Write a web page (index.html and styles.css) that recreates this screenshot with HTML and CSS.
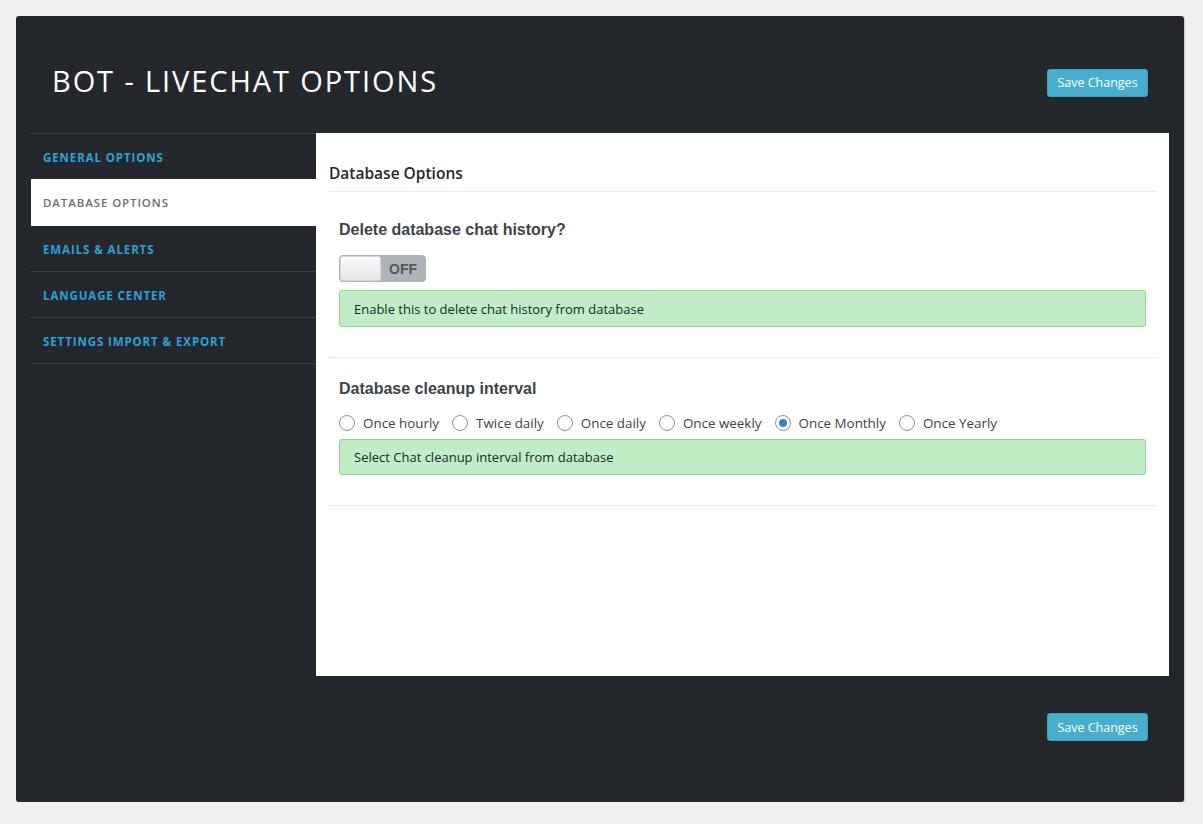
FILE: index.html
```html
<!DOCTYPE html>
<html lang="en">
<head>
<meta charset="utf-8">
<title>BOT - LIVECHAT OPTIONS</title>
<link rel="stylesheet" href="styles.css">
</head>
<body>
<div class="wrap">
  <header class="head">
    <h1 class="title">BOT - LIVECHAT OPTIONS</h1>
    <button class="btn">Save Changes</button>
  </header>
  <div class="main">
    <nav class="side">
      <a class="side-item">General Options</a>
      <a class="side-item active">Database Options</a>
      <a class="side-item">Emails &amp; Alerts</a>
      <a class="side-item">Language Center</a>
      <a class="side-item">Settings Import &amp; Export</a>
    </nav>
    <section class="panel">
      <h2 class="panel-title">Database Options</h2>
      <div class="group">
        <h3 class="group-title">Delete database chat history?</h3>
        <div class="toggle">
          <span class="knob"></span>
          <span class="toggle-label">OFF</span>
        </div>
        <div class="notice">Enable this to delete chat history from database</div>
      </div>
      <div class="group">
        <h3 class="group-title">Database cleanup interval</h3>
        <div class="radios">
          <label class="radio"><input type="radio" name="iv"><span>Once hourly</span></label>
          <label class="radio"><input type="radio" name="iv"><span>Twice daily</span></label>
          <label class="radio"><input type="radio" name="iv"><span>Once daily</span></label>
          <label class="radio"><input type="radio" name="iv"><span>Once weekly</span></label>
          <label class="radio"><input type="radio" name="iv" checked><span>Once Monthly</span></label>
          <label class="radio"><input type="radio" name="iv"><span>Once Yearly</span></label>
        </div>
        <div class="notice notice-2">Select Chat cleanup interval from database</div>
      </div>
    </section>
  </div>
  <footer class="foot">
    <button class="btn">Save Changes</button>
  </footer>
</div>
</body>
</html>
```

FILE: styles.css
```css
* { box-sizing: border-box; }
html, body { margin: 0; padding: 0; }
body {
  background: #f0f0f0;
  font-family: "Open Sans", "Noto Sans", sans-serif;
  color: #23282d;
}
.wrap {
  margin: 16px 0 0 16px;
  width: 1168px;
  height: 786px;
  background: #24282d;
  border-radius: 3px;
  box-shadow: 1px 1px 1px #c8c8c8;
  padding: 0 15px;
  display: flex;
  flex-direction: column;
}
.head {
  height: 117px;
  display: flex;
  align-items: center;
  justify-content: space-between;
  padding: 14px 21px 0 21px;
}
.title {
  margin: 0;
  margin-top: -3px;
  font-size: 29px;
  font-weight: 400;
  color: #fff;
  letter-spacing: 1.9px;
}
.btn {
  width: 101px;
  height: 28px;
  background: #47afcd;
  border: 1px solid #3d9fbc;
  border-radius: 3px;
  color: #fff;
  font-family: "Open Sans", "Noto Sans", sans-serif;
  font-size: 12.5px;
  padding: 0;
  cursor: pointer;
}
.head .btn { margin-top: 2px; }
.main {
  display: flex;
  height: 543px;
}
.side {
  width: 285px;
  display: flex;
  flex-direction: column;
  border-top: 1px solid #3d4247;
}
.side-item {
  height: 46px;
  display: flex;
  align-items: center;
  padding-left: 12px;
  padding-top: 1px;
  border-bottom: 1px solid #3d4247;
  color: #2ea0d6;
  font-size: 11.5px;
  font-weight: 700;
  text-transform: uppercase;
  letter-spacing: 0.9px;
}
.side-item.active {
  background: #fff;
  color: #6c6c6c;
  font-weight: 600;
  border-bottom-color: #fff;
  margin-top: -1px;
  height: 47px;
}
.panel {
  flex: 1;
  background: #fff;
  padding: 0 13px;
}
.panel-title {
  margin: 0;
  padding-top: 29px;
  height: 59px;
  font-size: 15.5px;
  font-weight: 600;
  color: #23282d;
  border-bottom: 1px solid #eaeaea;
  line-height: 22px;
}
.group {
  padding: 20px 10px 30px;
  border-bottom: 1px solid #eaeaea;
}
.group:first-of-type { padding-top: 27px; }
.group-title {
  margin: 0;
  font-family: "Liberation Sans", Arial, sans-serif;
  font-size: 16px;
  font-weight: 700;
  color: #3c434a;
  line-height: 22px;
}
.toggle {
  margin-top: 14px;
  width: 87px;
  height: 27px;
  border: 1px solid #aeb3b8;
  border-radius: 4px;
  background: #afb4b9;
  display: flex;
  align-items: center;
  position: relative;
}
.knob {
  width: 41px;
  height: 25px;
  border-radius: 3px;
  background: linear-gradient(#fafafa, #e6e6e6);
  border: 1px solid #d5d5d5;
}
.toggle-label {
  margin-left: 8px;
  font-family: "Liberation Sans", Arial, sans-serif;
  font-weight: 700;
  font-size: 14px;
  color: #55595d;
}
.notice {
  margin-top: 8px;
  height: 37px;
  display: flex;
  align-items: center;
  padding-left: 14px;
  background: #c1edc5;
  border: 1px solid #8ed793;
  border-radius: 3px;
  font-size: 13px;
  color: #23282d;
}
.notice-2 { height: 36px; margin-top: 6px; }
.radios {
  margin-top: 13px;
  display: flex;
  align-items: center;
  height: 20px;
}
.radio {
  display: flex;
  align-items: center;
  margin-right: 13px;
  font-size: 13.4px;
  color: #3c434a;
}
.radio input {
  -webkit-appearance: none;
  appearance: none;
  width: 16px;
  height: 16px;
  margin: 0 8px 0 0;
  border: 1px solid #8c8f94;
  border-radius: 50%;
  background: #fff;
  display: flex;
  align-items: center;
  justify-content: center;
}
.radio input:checked::before {
  content: "";
  width: 8px;
  height: 8px;
  border-radius: 50%;
  background: #3582c4;
}
.foot {
  display: flex;
  justify-content: flex-end;
  padding: 37px 21px 0 0;
}
```
